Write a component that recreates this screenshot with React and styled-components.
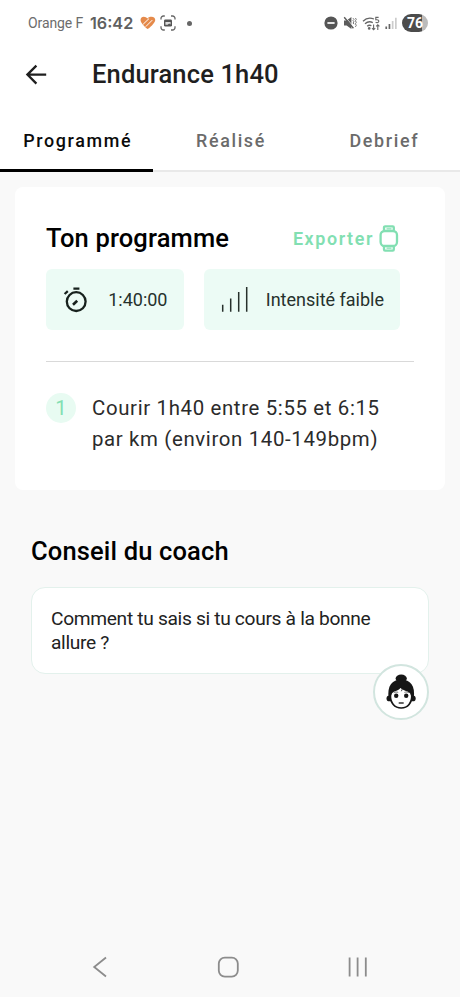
import React, { useState } from "react";
import styled, { createGlobalStyle } from "styled-components";

const TABS = ["Programmé", "Réalisé", "Debrief"];

const App = () => {
  const [selected, setSelected] = useState(TABS[0]);

  return (
    <>
      <GlobalStyle />
      <Screen>
        <StatusBar />
        <Header>
          <BackBtn type="button" aria-label="Retour">
            <BackIcon />
          </BackBtn>
          <h1>Endurance 1h40</h1>
        </Header>

        <TabList>
          {TABS.map((tab) => (
            <Tab
              key={tab}
              type="button"
              $selected={tab === selected}
              onClick={() => setSelected(tab)}
            >
              {tab}
            </Tab>
          ))}
        </TabList>

        <Card>
          <CardHeader>
            <Title>Ton programme</Title>
            <ExportBtn type="button">
              Exporter
              <WatchIcon />
            </ExportBtn>
          </CardHeader>
          <ChipRow>
            <Chip $width={137.5}>
              <TimerIcon />
              <ChipLabel>1:40:00</ChipLabel>
            </Chip>
            <Chip $width={196}>
              <IntensityIcon />
              <ChipLabel>Intensité faible</ChipLabel>
            </Chip>
          </ChipRow>
          <Divider />
          <Step>
            <StepNumber>1</StepNumber>
            <StepText>
              Courir 1h40 entre 5:55 et 6:15
              <br />
              par km (environ 140-149bpm)
            </StepText>
          </Step>
        </Card>

        <Coach>
          <Title>Conseil du coach</Title>
          <Advice>
            Comment tu sais si tu cours à la bonne allure ?
            <Avatar>
              <CoachFace />
            </Avatar>
          </Advice>
        </Coach>

        <NavBar>
          <svg width="16" height="22" viewBox="0 0 16 22">
            <path d="M14 1.5 2.2 11 14 20.5" />
          </svg>
          <svg width="22" height="22" viewBox="0 0 22 22">
            <rect x="1.8" y="1.6" width="19" height="19" rx="6" />
          </svg>
          <svg width="20" height="22" viewBox="0 0 20 22">
            <path d="M1.6 1.6v19M9.6 1.6v19M17.8 1.6v19" />
          </svg>
        </NavBar>
      </Screen>
    </>
  );
};

const StatusBar = () => (
  <Status>
    <Carrier>Orange F</Carrier>
    <Clock>16:42</Clock>
    <HeartIcon />
    <CaptureIcon />
    <Dot />
    <StatusRight>
      <svg width="14" height="14" viewBox="0 0 14 14">
        <circle cx="7" cy="7" r="6.6" fill="#555" />
        <path d="M3.4 7h7.2" stroke="#fff" strokeWidth="1.7" />
      </svg>
      <MuteIcon />
      <WifiIcon />
      <SignalIcon />
      <Battery>76</Battery>
    </StatusRight>
  </Status>
);

const HeartIcon = () => (
  <svg width="16" height="14" viewBox="0 0 16 14" fill="none">
    <path
      d="M7.600 13C6 12.400 1 7.200.6 4.800.2 2.400 1.800.8 3.800.8c1.600 0 2.600.8 3.600 1.600C8.800 1 10.200.8 11.400.8c2.400 0 4.200 1.400 3.800 3.800C14.800 7 9.600 12.400 7.600 13z"
      fill="#e58a4b"
    />
    <path
      d="M3.400 8 8.800 2.800M6 10.400 12 4.400"
      stroke="#fff"
      strokeWidth="1"
      strokeLinecap="round"
    />
  </svg>
);

const CaptureIcon = () => (
  <svg width="16" height="16" viewBox="0 0 16 16" fill="none">
    <path
      d="M1 4.6V3.4A2.4 2.4 0 0 1 3.4 1h1.4M11 1h1.6A2.4 2.4 0 0 1 15 3.4v1.2M15 11.2v1.4a2.4 2.4 0 0 1-2.4 2.4H11M4.8 15H3.4A2.4 2.4 0 0 1 1 12.6v-1.4"
      stroke="#666"
      strokeWidth="1.3"
    />
    <rect x="4" y="4.4" width="8" height="7.2" rx="1.4" fill="#555" />
    <path d="M5.400 7h5.200v2.600L9.200 8.400 7.600 9.800H5.400z" fill="#ddd" />
  </svg>
);

const MuteIcon = () => (
  <svg width="14" height="14" viewBox="0 0 14 14" fill="none">
    <path d="M1 4.600h2.600L8.400 1v12L3.600 9.600H1z" fill="#5c5c5c" />
    <path d="M2.200 1 11 11.200" stroke="#fff" strokeWidth=".9" />
    <path d="M1.200 1.200 10.400 12.200" stroke="#5c5c5c" strokeWidth="1.400" />
    <path
      d="m10 2.200 1 1.200-1 1.200 1 1.200-1 1.200 1 1.200M12.400 2l.9 1.400-.9 1.400.9 1.500-.9 1.500.9 1.500-.9 1.600"
      stroke="#777"
      strokeWidth="1"
    />
  </svg>
);

const WifiIcon = () => (
  <svg width="18" height="15" viewBox="0 0 18 15" fill="none">
    <path
      d="M1 5.2C4.2 2 8.6 1.6 12 3M3 7.8c2.4-2.2 5.4-2.4 7.8-1.2M5.2 10.2c1.2-1 2.8-1.2 4.2-.4"
      stroke="#666"
      strokeWidth="1.3"
    />
    <circle cx="7.2" cy="12.4" r="1.3" fill="#666" />
    <path
      d="M16.600 1.400h-2.800v2.400c2-.3 3 .4 3 1.500s-1.600 1.900-3.200 1"
      stroke="#666"
      strokeWidth="1.1"
    />
    <path
      d="M11.600 8.600v5M10 12.200l1.600 1.600 1.600-1.600M15.800 14V9M14.200 10.400l1.600-1.600 1.600 1.600"
      stroke="#666"
      strokeWidth="1.1"
    />
  </svg>
);

const SignalIcon = () => (
  <svg width="12" height="13" viewBox="0 0 12 13">
    <path d="M.4 9.400h1.700V12H.4zM3.600 7h1.700v5H3.600z" fill="#666" />
    <path d="M6.800 4h1.700v8H6.800zM10 .8h1.700V12H10z" fill="#ccc" />
  </svg>
);

const BackIcon = () => (
  <svg width="22" height="22" viewBox="0 0 22 22" fill="none">
    <path
      d="M21.200 10.600H3M11.400 1.600 2.400 10.600l9 9"
      stroke="#1f1f1f"
      strokeWidth="2.300"
    />
  </svg>
);

const WatchIcon = () => (
  <svg width="20" height="27" viewBox="0 0 20 27" fill="none">
    <g stroke="#82dfb2" strokeWidth="2.300" strokeLinejoin="round">
      <rect x="1.600" y="6" width="16.400" height="15" rx="4" />
      <path d="M5 5.800V2.400c0-.7.500-1.100 1.100-1.100h7.600c.6 0 1.100.4 1.100 1.100v3.400M5 21.200v3.400c0 .7.500 1.100 1.100 1.100h7.600c.6 0 1.100-.4 1.100-1.100v-3.400" />
      <path d="M7.500 3.900h5M7.500 23.100h5" strokeWidth="1.300" />
    </g>
  </svg>
);

const TimerIcon = () => (
  <svg width="24" height="26" viewBox="0 0 24 26" fill="none">
    <g stroke="#17211d" strokeWidth="2.300">
      <circle cx="13.200" cy="14.600" r="9.400" />
      <path d="M10.400 1.700h6M1.600 7l3.200-2.800" />
      <path d="m10 17.800 4.200-4" strokeWidth="2.600" />
    </g>
  </svg>
);

const IntensityIcon = () => (
  <svg width="28" height="27" viewBox="0 0 28 27">
    <path
      d="M1.700 18.800v6.900M9.700 12.600v13.100M17.700 6v19.700M25.700 1v24.700"
      stroke="#27302c"
      strokeWidth="1.500"
    />
  </svg>
);

const CoachFace = () => (
  <svg width="30" height="36" viewBox="0 0 30 36">
    <ellipse cx="15.200" cy="4.600" rx="5.600" ry="4.200" fill="#161616" />
    <circle cx="3.400" cy="24.400" r="2.900" fill="#161616" />
    <circle cx="26.800" cy="24.400" r="2.900" fill="#161616" />
    <path
      d="M2.600 24C1 12 6 5.600 15.200 5.600S29.400 12 27.800 24z"
      fill="#161616"
    />
    <path
      d="M4.400 21.600c.2-2.600 1.200-3.800 3.400-4.800 3-1 5.400-1.600 6.600-4.400 1.600 2.800 4.600 3.400 7.600 4.400 2.200 1 3.600 2.200 3.800 4.800.2 7.200-4 12.400-10.600 12.400S4.200 28.800 4.400 21.600z"
      fill="#fff"
      stroke="#161616"
      strokeWidth="1.700"
    />
    <path d="M14.600 11.800c1.800 1.200 2 3.200.8 5.400" stroke="#161616" fill="none" strokeWidth=".8" />
    <path
      d="M7.800 18.600c1.400-.7 3-.7 4.400-.2M18.400 18.400c1.400-.5 3-.5 4.400.2"
      stroke="#555"
      fill="none"
      strokeWidth=".8"
    />
    <circle cx="10.200" cy="21.800" r="2.200" fill="#161616" />
    <circle cx="20.200" cy="21.800" r="2.200" fill="#161616" />
    <path d="M13.200 29h4" stroke="#333" strokeWidth="1.400" strokeLinecap="round" />
  </svg>
);

const GlobalStyle = createGlobalStyle`
  * {
    box-sizing: border-box;
  }

  body {
    margin: 0;
    background: #f9f9f9;
    font-family: Roboto, "Liberation Sans", sans-serif;
  }

  h1, h2, p {
    margin: 0;
  }

  button {
    border: 0;
    padding: 0;
    background: none;
    font-family: inherit;
  }

  svg {
    display: block;
    flex: none;
  }
`;

const Screen = styled.div`
  display: flex;
  flex-direction: column;
  width: 460px;
  height: 997px;
  overflow: hidden;
  background: #f9f9f9;
`;

const Status = styled.div`
  display: flex;
  align-items: center;
  gap: 4px;
  height: 46px;
  padding: 0 32px 0 28px;
  background: #fff;
`;

const Carrier = styled.span`
  flex: none;
  width: 58px;
  color: #6c6c6c;
  font-size: 14px;
  letter-spacing: -0.1px;
  white-space: nowrap;
`;

const Clock = styled.span`
  flex: none;
  width: 46px;
  color: #606060;
  font-family: Inter, Roboto, sans-serif;
  font-size: 16.2px;
  font-weight: 600;
`;

const Dot = styled.span`
  width: 5px;
  height: 5px;
  margin-left: 7px;
  border-radius: 50%;
  background: #666;
`;

const StatusRight = styled.div`
  display: flex;
  align-items: center;
  gap: 5px;
  margin-left: auto;
`;

const Battery = styled.span`
  width: 26px;
  height: 18px;
  border-radius: 9px;
  background: linear-gradient(90deg, #4c4c4c 76%, #bbb 76%);
  color: #fff;
  font-size: 14px;
  font-weight: 700;
  line-height: 18px;
  text-align: center;
`;

const Header = styled.header`
  display: flex;
  align-items: center;
  height: 57px;
  padding-left: 25px;
  background: #fff;

  & h1 {
    color: #1f1f1f;
    font-size: 25.5px;
    font-weight: 500;
    letter-spacing: 0.15px;
    line-height: 30px;
    padding-bottom: 1px;
  }
`;

const BackBtn = styled.button`
  width: 67px;
`;

const TabList = styled.nav`
  display: grid;
  grid-template-columns: repeat(3, 1fr);
  height: 69px;
  background: #fff;
  box-shadow: inset 0 -2px #e9e9e9;
`;

const Tab = styled.button`
  padding: 9px 0 0 2px;
  border-bottom: 3px solid ${({ $selected }) => ($selected ? "#000" : "transparent")};
  color: ${({ $selected }) => ($selected ? "#0b0b0b" : "#6b6b6b")};
  font-size: 17.9px;
  font-weight: 500;
  letter-spacing: 1.65px;
`;

const Card = styled.section`
  height: 303px;
  margin: 15px 15px 0;
  padding: 33px 31px 0;
  border-radius: 8px;
  background: #fff;
`;

const CardHeader = styled.div`
  display: flex;
  align-items: center;
  justify-content: space-between;
  height: 36px;
  margin-bottom: 13px;
  padding-right: 15px;
`;

const Title = styled.h2`
  color: #000;
  font-size: 25.5px;
  font-weight: 500;
  letter-spacing: 0.15px;
  line-height: 30px;
`;

const ExportBtn = styled.button`
  display: flex;
  align-items: center;
  gap: 5px;
  color: #82dfb2;
  font-size: 17.9px;
  font-weight: 600;
  letter-spacing: 1.6px;
`;

const ChipRow = styled.div`
  display: flex;
  gap: 20.5px;
`;

const Chip = styled.div`
  display: flex;
  align-items: center;
  justify-content: space-between;
  width: ${({ $width }) => $width}px;
  height: 61px;
  padding: 0 16px 0 17px;
  border-radius: 6px;
  background: #ecfbf5;
`;

const ChipLabel = styled.span`
  color: #26312d;
  font-size: 18px;
  white-space: nowrap;
`;

const Divider = styled.div`
  height: 1px;
  margin: 31px 0;
  background: #d9d9d9;
`;

const Step = styled.div`
  display: flex;
  gap: 16px;
`;

const StepNumber = styled.span`
  width: 30px;
  height: 30px;
  border-radius: 50%;
  background: #e8fbf2;
  color: #82dfb2;
  font-size: 20.5px;
  line-height: 30px;
  text-align: center;
`;

const StepText = styled.p`
  color: #2b2b2b;
  font-size: 20.4px;
  letter-spacing: 0.65px;
  line-height: 30.6px;
  white-space: nowrap;
`;

const Coach = styled.section`
  padding: 46px 31px 0;
`;

const Advice = styled.div`
  position: relative;
  height: 87px;
  margin-top: 21px;
  padding: 19px 40px 0 19px;
  border: 1px solid #e3f1ec;
  border-radius: 14px;
  background: #fff;
  color: #222;
  font-size: 19.2px;
  letter-spacing: -0.33px;
  line-height: 23.5px;
`;

const Avatar = styled.div`
  position: absolute;
  right: -1px;
  bottom: -47px;
  display: flex;
  align-items: center;
  justify-content: center;
  width: 56px;
  height: 56px;
  border: 2px solid #d2e5df;
  border-radius: 50%;
  background: #fff;
`;

const NavBar = styled.footer`
  display: flex;
  align-items: center;
  justify-content: space-between;
  height: 60px;
  margin-top: auto;
  padding: 0 92px;

  & svg {
    fill: none;
    stroke: #8c8c8c;
    stroke-width: 1.8;
  }
`;

export default App;
